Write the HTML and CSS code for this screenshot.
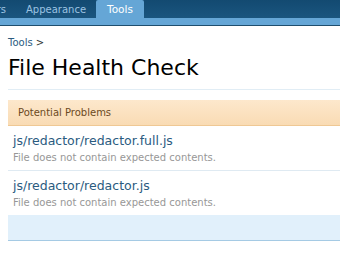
FILE: index.html
```html
<!DOCTYPE html>
<html lang="en">
	<head>
		<meta charset="UTF-8" />
		<meta name="viewport" content="width=device-width, initial-scale=1.0" />
		<title>File Health Check</title>
		<link rel="stylesheet" href="styles.css">
	</head>
	<body>
		<div class="header">
			<nav class="tabs">
				<a class="tab tab-cut" href="#">Users</a>
				<a class="tab" href="#">Appearance</a>
				<a class="tab active" href="#">Tools</a>
			</nav>
			<div class="subnav"></div>
		</div>

		<div class="content">
			<div class="breadcrumb"><a href="#">Tools</a> &gt;</div>
			<h1>File Health Check</h1>

			<div class="section">
				<h2 class="section-head">Potential Problems</h2>
				<ol class="problems">
					<li>
						<a href="#">js/redactor/redactor.full.js</a>
						<div class="hint">File does not contain expected contents.</div>
					</li>
					<li>
						<a href="#">js/redactor/redactor.js</a>
						<div class="hint">File does not contain expected contents.</div>
					</li>
				</ol>
				<div class="section-foot"></div>
			</div>
		</div>
	</body>
</html>
```

FILE: styles.css
```css
body {
	margin: 0;
	font-family: "DejaVu Sans", sans-serif;
	background-color: #fff;
	overflow: hidden;
}
a {
	text-decoration: none;
}
.header {
	background: linear-gradient(#134a71, #1d5a85);
}
.tabs {
	display: flex;
	height: 18px;
}
.tab {
	display: block;
	flex: none;
	padding: 0 10px;
	line-height: 19px;
	font-size: 10px;
	color: #9cc3e2;
}
.tab-cut {
	margin-left: -32px;
}
.tab.active {
	padding: 0 11px;
	font-size: 10.5px;
	background-color: #65a6d6;
	color: #fff;
	border-radius: 2px 2px 0 0;
}
.subnav {
	height: 7px;
	background-color: #65a6d6;
	border-bottom: 1px solid #1f4e6e;
}
.content {
	padding-left: 8px;
}
.breadcrumb {
	margin-top: 11px;
	font-size: 10px;
	line-height: 12px;
	color: #333;
}
.breadcrumb a {
	color: #2b5b7f;
}
h1 {
	margin: 6px 0 0;
	padding-bottom: 9px;
	font-size: 22px;
	font-weight: normal;
	color: #000;
	border-bottom: 1px solid #e1edf5;
}
.section {
	margin-top: 10px;
}
.section-head {
	margin: 0;
	padding: 0 10px;
	height: 25px;
	line-height: 25px;
	font-size: 10px;
	font-weight: normal;
	color: #6c4a22;
	background: linear-gradient(#fde8cc, #f9dbb4);
	border-bottom: 1px solid #efc894;
}
.problems {
	list-style: none;
	margin: 0;
	padding: 0;
}
.problems li {
	padding: 7px 5px 5px;
	border-bottom: 1px solid #dfeaf2;
}
.problems li:last-child {
	border-bottom: none;
}
.problems a {
	display: block;
	font-size: 12.5px;
	line-height: 16px;
	color: #2b5b7f;
}
.hint {
	margin-top: 2px;
	font-size: 10px;
	line-height: 14px;
	color: #979797;
}
.section-foot {
	height: 25px;
	background-color: #e1f0fb;
	border-bottom: 1px solid #a5cae4;
}
```
